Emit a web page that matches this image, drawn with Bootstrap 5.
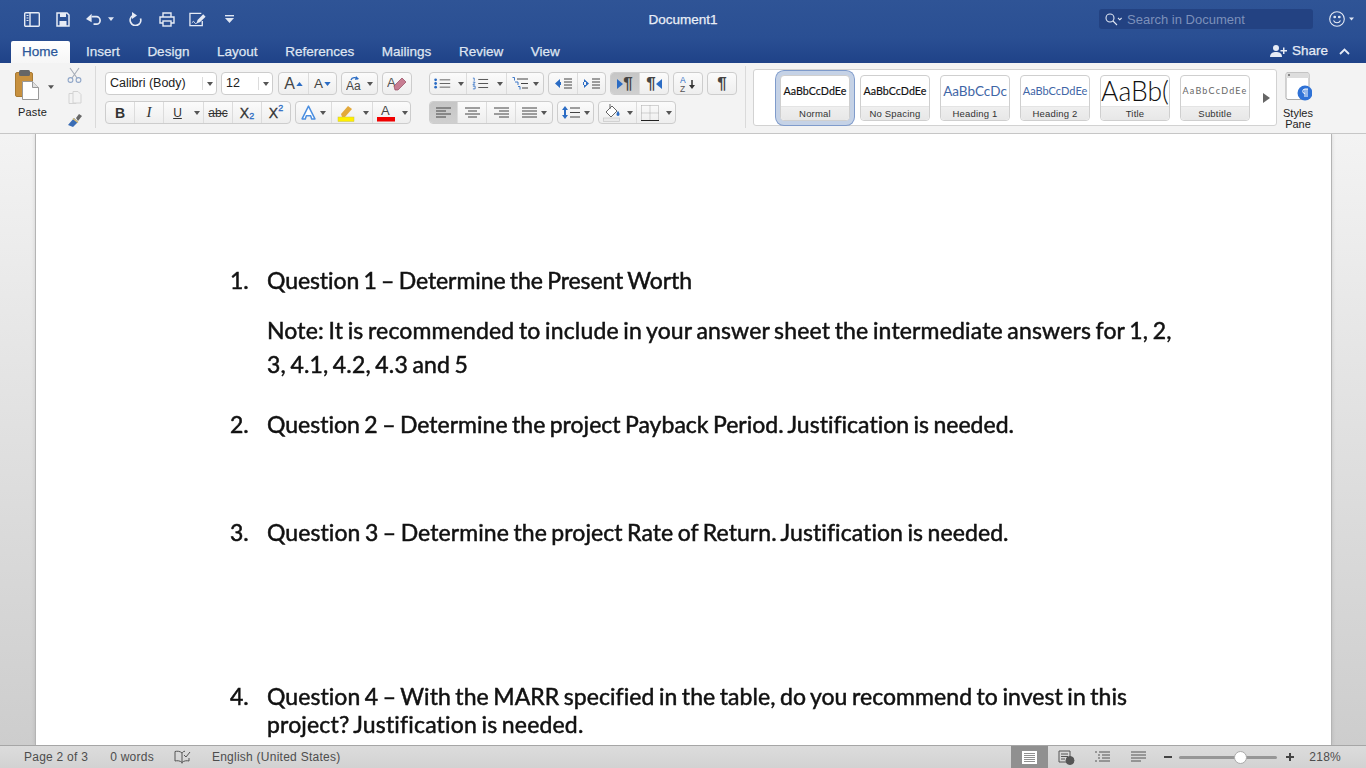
<!doctype html>
<html lang="en"><head><meta charset="utf-8"><title>Document1</title>
<link href="https://cdn.jsdelivr.net/npm/bootstrap@5.3.0/dist/css/bootstrap.min.css" rel="stylesheet">
<style>
html,body{height:100%;overflow:hidden}
body{font-family:"Liberation Sans",Arial,sans-serif;background:#d6d6d6;width:1366px;height:768px}
.app{height:768px}
.title-top{height:38px;background:linear-gradient(#2f5496,#2a4f93);color:#fff;padding-left:24px;padding-right:12px}
.title-top svg{display:block;flex:none}
.ml-6{margin-left:6px}.ml-14{margin-left:14px}.ml-15{margin-left:15px}.ml-16{margin-left:16px}.ml-17{margin-left:17px}.ml-18{margin-left:18px}
.doc-name{left:0;right:0;top:11px;font-size:13.5px;-webkit-text-stroke:.25px #e9eef7;text-align:center;color:#e9eef7;line-height:17px}
.search-box{width:214px;height:20px;background:#234282;border-radius:3px;padding-left:6px;margin-left:auto;margin-right:16px;color:#7c90ba;font-size:13px}
.search-box span{margin-left:5px;padding-top:1px}
.tab-row{height:25px;background:linear-gradient(#2a4f93,#1f4288);padding-left:11px;padding-right:16px}
.w-tab{height:22px;color:#dfe5f1;font-size:13.5px;-webkit-text-stroke:.25px #dfe5f1;padding:2px 11px 0;margin-right:5.6px;line-height:17px}
.w-tab.on{background:linear-gradient(#fff,#f6f6f6);color:#2b579a;-webkit-text-stroke:.25px #2b579a;border-radius:2px 2px 0 0;margin-right:5px;padding-right:12px}
.share-box{height:25px;padding-top:1px}
.share-txt{margin:0 11px 0 4px;color:#e6ebf5;font-size:13.5px;-webkit-text-stroke:.25px #e6ebf5}
.ribbon{height:71px;background:#f3f3f3;border-bottom:1px solid #c6c6c6;flex:none}
.paste{width:96px;height:62px;margin-top:3px;border-right:1px solid #dadada;flex:none}
.paste-main{width:48px;font-size:11px;color:#222;padding:4px 0 0 15px;flex:none}
.paste-lbl{margin:4px 0 0 3px;white-space:nowrap;letter-spacing:.2px}
.paste-car{margin-top:19px;flex:none}
.paste-side{width:15px;margin-left:13px;flex:none;gap:7px;padding-top:1px}
.paste-side svg{flex:none}
.rows{padding-top:9px;margin-left:9px;width:632px;flex:none}
.row-gap{height:23px;margin-bottom:6px;gap:4px}
.row-gap>*{flex:none}
.mr-para{margin-right:13px}
.mr-para2{margin-right:14px}
.tb-shift{margin-left:1px}
.tb{height:23px;border:1px solid #cdcdcd;border-radius:4px;background:linear-gradient(#fbfbfb,#eeeeee);overflow:hidden}
.tb>div{height:21px;border-right:1px solid #dcdcdc;flex:none}
.tb>div:last-child{border-right:0}
.tb>div.noline{border-right:0}
.tb>div.act{background:linear-gradient(#c6c6c6,#cfcfcf)}
.fm{display:flex;align-items:center;justify-content:center;color:#333;font-size:14px;line-height:1}
.c11{width:11px}.c12{width:12px}.c13{width:13px}.c14{width:14px}.c25{width:25px}.c26{width:26px}.c27{width:27px}.c28{width:28px}.c29{width:29px}.c30{width:30px}.c35{width:35px}.c36{width:36px}
.t-b{font-weight:700;font-size:14px}.t-i{font-style:italic;font-family:"Liberation Serif",serif;font-size:15px}.t-s{font-size:12px}.t-x{font-size:14px;-webkit-text-stroke:.3px #333}
.t-x sub,.t-x sup{font-size:9px;color:#2b6cc4;-webkit-text-stroke:.3px #2b6cc4;position:relative;line-height:0}
.t-x sub{bottom:-.4em}.t-x sup{top:-.5em}
.big-a{font-size:16px;color:#444;font-weight:400;margin-right:1px}.sm-a{font-size:13.5px;color:#444;font-weight:400;margin-right:1px}
.pil-g{font-size:17px;color:#444;font-weight:700;line-height:1}
.field{height:23px;background:#fff;border:1px solid #cdcdcd;border-radius:4px;font-size:12.5px;color:#222;padding-left:4px;line-height:21px}
.f-font{width:112px}.f-size{width:52px}
.field span{flex:1 1 auto;white-space:nowrap}
.field i{width:14px;height:13px;border-left:1px solid #dcdcdc;flex:none}
.car{width:0;height:0;border-left:3px solid transparent;border-right:3px solid transparent;border-top:4px solid #555;flex:none;display:block}
.sep-v{width:1px;height:62px;background:#dadada;margin-top:3px;margin-left:8px;flex:none}
.gallery{width:524px;height:57px;margin-top:6px;margin-left:7px;background:#fff;border:1px solid #d2d2d2;border-radius:3px;padding:5px 0 0 26px;gap:10px;flex:none}
.sty{width:70px;height:46px;border:1px solid #cfcfcf;border-radius:4px;background:#fff;flex:none}
.sty-sample{height:30px;line-height:30px;text-align:center;font-family:Lato,sans-serif;font-size:10.7px;color:#111;-webkit-text-stroke:.15px #111;white-space:nowrap;border-radius:4px 4px 0 0}
.h1s{font-size:13.5px;color:#3f66a6;-webkit-text-stroke:0}
.h2s{font-size:11px;color:#3f66a6;-webkit-text-stroke:0}
.tts{font-size:26.5px;color:#111;font-weight:300;-webkit-text-stroke:0}
.sbs{font-size:9px;color:#666;letter-spacing:1.200px;-webkit-text-stroke:0}
.sty-name{height:14px;background:linear-gradient(#efefef,#e7e7e7);font-size:9.500px;line-height:14px;text-align:center;color:#333;border-top:1px solid #e4e4e4;letter-spacing:.2px;border-radius:0 0 4px 4px}
.sty.on{box-shadow:0 0 0 4px #c5d2e6,0 0 0 5px #7f9bcb}
.g-arrow{align-self:center;margin:-4px 0 0 3px;flex:none}
.pane{width:42px;font-size:11px;line-height:11px;text-align:center;color:#222;padding-top:9px;flex:none}
.pane-lbl{margin-top:6px}
.work{height:611px;background:linear-gradient(#f3f3f3,#cdcdcd);overflow:hidden;padding-left:35px;padding-right:34px;flex:none}
.page-sheet{height:100%;background:#fff;border-left:1px solid #b4b4b4;border-right:1px solid #b4b4b4;box-shadow:0 0 4px rgba(0,0,0,.12);padding:132px 0 0 194px;color:#111;font-family:Lato,"Noto Sans",sans-serif;font-size:23px;font-variant-ligatures:none;-webkit-text-stroke:.5px #111;word-spacing:-1.5px;white-space:nowrap;line-height:28px}
.q-line{display:flex;filter:blur(.3px)}
.q-num{width:37px;flex:none}
.q-cont{height:28px}
.mg-a{margin-top:22px}.mg-b{margin-top:6px}.mg-c{margin-top:32px}.mg-d{margin-top:80px}.mg-e{margin-top:136px}
.l1{letter-spacing:-.075px}.l2{letter-spacing:.16px}.l3{letter-spacing:.15px}.l4{letter-spacing:.02px}.l5{letter-spacing:.08px}.l6{letter-spacing:.07px}.l7{letter-spacing:.17px}
.status{height:23px;background:linear-gradient(#dcdcdc,#d2d2d2);border-top:1px solid #a6a6a6;font-size:12px;letter-spacing:.25px;color:#4d4d4d;padding-left:24px;padding-right:25px;flex:none}
.st-w{margin-left:22px}.st-bk{margin-left:20px;flex:none}.st-en{margin-left:21px}
.st-view{width:36px;height:22px;flex:none}
.st-view.act{background:#909090;width:37px}
.slider-t{width:98px;height:3px;background:#969696;border-radius:2px;position:relative;margin-left:7px;flex:none}
.thumb{position:absolute;left:55px;top:-5px;width:13px;height:13px;border-radius:50%;background:#fff;border:1px solid #aaa}
.s-minus{margin-left:8px;flex:none}.s-plus{margin-left:9px;flex:none}.st-pct{margin-left:15px}
</style></head>
<body>
<div class="app d-flex flex-column">
 <div class="title-top d-flex align-items-center position-relative">
  <div class="doc-name position-absolute">Document1</div>
  <svg width="16" height="15" viewBox="0 0 16 15" fill="none" stroke="#e6ebf5" stroke-width="1.4"><rect x=".7" y=".7" width="14.600" height="13.600" rx="1"/><path d="M6 1v13"/><path d="M2.500 3h2v1h-2zM2.500 5.500h2v1h-2zM2.500 8h2v1h-2z" fill="#e6ebf5" stroke="none"/></svg>
  <svg class="ml-16" width="14" height="15" viewBox="0 0 14 15" fill="none"><path d="M1 1h10l2 2v11H1z" stroke="#e6ebf5" stroke-width="1.500"/><path d="M4 1h6v4H4zM3.500 9h7v5h-7z" fill="#e6ebf5"/></svg>
  <svg class="ml-16" width="16" height="13" viewBox="0 0 17 13" fill="none"><path d="M6 3.500h5a4 4 0 0 1 0 8H8" stroke="#e6ebf5" stroke-width="1.800"/><path d="M0 6l6-5.500v9z" fill="#e6ebf5"/></svg>
  <svg class="ml-6" width="6" height="4" viewBox="0 0 8 5"><path d="M0 0h8L4 5z" fill="#dfe6f3"/></svg>
  <svg class="ml-15" width="13" height="14" viewBox="0 0 13 14" fill="none"><path d="M4 3.500a5.300 5.300 0 1 0 7.500 3" stroke="#e6ebf5" stroke-width="1.700"/><path d="M3 0v7l5-3.500z" fill="#e6ebf5"/></svg>
  <svg class="ml-17" width="16" height="15" viewBox="0 0 16 15" fill="none" stroke="#e6ebf5" stroke-width="1.400"><path d="M4 5V1h8v4M4 11H1V5h14v6h-3"/><rect x="4" y="9" width="8" height="5"/></svg>
  <svg class="ml-14" width="18" height="15" viewBox="0 0 19 15" fill="none" stroke="#e6ebf5" stroke-width="1.400"><path d="M13 1H1v13h13V9"/><path d="M3 11c2-2 2-2 3 0s2 0 3 0" stroke-width="1"/><path d="M9 8l6-6 2.500 2.500-6 6-3.500 1z" fill="#e6ebf5" stroke="none"/></svg>
  <svg class="ml-18" width="9" height="8" viewBox="0 0 9 8"><path d="M0 0h9v1.400H0z" fill="#dfe6f3"/><path d="M0 3h9L4.500 8z" fill="#dfe6f3"/></svg>
  <div class="search-box d-flex align-items-center">
   <svg width="17" height="13" viewBox="0 0 17 13" fill="none" stroke="#dfe6f3" stroke-width="1.100"><circle cx="5" cy="5" r="4"/><path d="M8 8l4 4M13 5l1.800 1.800L16.600 5"/></svg>
   <span>Search in Document</span>
  </div>
  <svg width="16" height="16" viewBox="0 0 16 16" fill="none" stroke="#e6ebf5" stroke-width="1.100"><circle cx="8" cy="8" r="7.300"/><path d="M4.500 9.500c1.500 3 5.500 3 7 0"/><circle cx="5.700" cy="6" r=".8" fill="#e6ebf5"/><circle cx="10.300" cy="6" r=".8" fill="#e6ebf5"/></svg>
  <svg class="ms-1" width="5" height="4" viewBox="0 0 8 5"><path d="M0 0h8L4 5z" fill="#dfe6f3"/></svg>
 </div>
 <div class="tab-row d-flex align-items-end">
  <div class="w-tab on">Home</div>
  <div class="w-tab">Insert</div><div class="w-tab">Design</div><div class="w-tab">Layout</div><div class="w-tab">References</div><div class="w-tab">Mailings</div><div class="w-tab">Review</div><div class="w-tab">View</div>
  <div class="ms-auto d-flex align-items-center share-box">
   <svg width="18" height="12" viewBox="0 0 18 12" fill="#e6ebf5"><circle cx="6" cy="3" r="3"/><path d="M0 12c0-4 3-5 6-5s6 1 6 5z"/><path d="M13 2.500h1.500V5H17v1.500h-2.500V9H13V6.500h-2.500V5H13z"/></svg>
   <span class="share-txt">Share</span>
   <svg width="11" height="7" viewBox="0 0 11 7" fill="none" stroke="#e6ebf5" stroke-width="1.800"><path d="M1 6l4.500-4.500L10 6"/></svg>
  </div>
 </div>
 <div class="ribbon d-flex">
  <div class="paste d-flex">
   <div class="paste-main">
    <svg width="24" height="30" viewBox="0 0 24 30" class="d-block"><rect x=".5" y="2.500" width="17" height="24" rx="1.500" fill="#c8913f" stroke="#a87a33"/><rect x="4" y="0" width="11" height="6" rx="1.500" fill="#666"/><path d="M7.500 11.500h10l6 6v12h-16z" fill="#fff" stroke="#999"/><path d="M17.500 11.500v6h6" fill="#e2e2e2" stroke="#999"/></svg>
    <div class="paste-lbl">Paste</div>
   </div>
   <svg class="paste-car" width="6" height="4" viewBox="0 0 8 5"><path d="M0 0h8L4 5z" fill="#555"/></svg>
   <div class="paste-side d-flex flex-column align-items-center">
    <svg width="15" height="16" viewBox="0 0 15 16" fill="none" stroke="#a6adb8" stroke-width="1.100"><path d="M3 1l7 10M12 1L5 11"/><circle cx="3.500" cy="13" r="2.400" stroke="#8fa6c8"/><circle cx="11.500" cy="13" r="2.400" stroke="#8fa6c8"/></svg>
    <svg width="14" height="16" viewBox="0 0 14 16" fill="#f3f3f3" stroke="#d3d3d3"><path d="M1 3.500h7v10H1z"/><path d="M5 1.500h5l3 3v8.500H5z"/></svg>
    <svg width="16" height="15" viewBox="0 0 16 15"><path d="M9 5l3-4 3 2-4 5z" fill="#666"/><path d="M1 12l6-7 4 4-5 5z" fill="#3b6db4"/><path d="M6 5.500l5 4" stroke="#e0c070" stroke-width="1.500"/></svg>
   </div>
  </div>
  <div class="rows">
   <div class="row-gap d-flex">
    <div class="field d-flex align-items-center f-font"><span>Calibri (Body)</span><i class="d-flex align-items-center justify-content-center"><b class="car"></b></i></div>
    <div class="field d-flex align-items-center f-size"><span>12</span><i class="d-flex align-items-center justify-content-center"><b class="car"></b></i></div>
    <div class="tb d-flex tb-shift"><div class="fm c30"><span class="big-a">A</span><svg width="7" height="4" viewBox="0 0 8 5"><path d="M0 5h8L4 0z" fill="#2b6cc4"/></svg></div><div class="fm c27"><span class="sm-a">A</span><svg width="7" height="4" viewBox="0 0 8 5"><path d="M0 0h8L4 5z" fill="#2b6cc4"/></svg></div></div>
    <div class="tb d-flex"><div class="fm c35 gap-1"><svg width="17" height="17" viewBox="0 0 17 17"><text x="0" y="15" font-size="12" font-family="Liberation Sans" fill="#444">Aa</text><path d="M5 5c1-3 5-3 7-1" stroke="#2b6cc4" stroke-width="1.300" fill="none"/><path d="M10 1l3 3-4 1z" fill="#2b6cc4"/></svg><b class="car"></b></div></div>
    <div class="tb d-flex mr-para"><div class="fm c28"><svg width="20" height="18" viewBox="0 0 20 18"><text x="0" y="12" font-size="13" font-family="Liberation Sans" fill="#555">A</text><path d="M7 11l8-8 4 4-8 8H8z" fill="#c77d92" stroke="#93495e" stroke-width=".7"/></svg></div></div>
    <div class="tb d-flex"><div class="fm c25 noline"><svg width="17" height="13" viewBox="0 0 21 13"><circle cx="2" cy="2" r="1.700" fill="#2b6cc4"/><circle cx="2" cy="6.500" r="1.700" fill="#2b6cc4"/><circle cx="2" cy="11" r="1.700" fill="#2b6cc4"/><path d="M7 2h13M7 6.500h13M7 11h13" stroke="#444"/></svg></div><div class="fm c12"><b class="car"></b></div><div class="fm c27 noline"><svg width="17" height="13" viewBox="0 0 19 13"><path d="M1 .5h1.500v3M1 5h2.500L1 8h2.500M1 9.500h2.500v3H1" stroke="#2b6cc4" fill="none" stroke-width=".9"/><path d="M7 2h11M7 6.500h11M7 11h11" stroke="#444"/></svg></div><div class="fm c13"><b class="car"></b></div><div class="fm c36 gap-1"><svg width="17" height="13" viewBox="0 0 17 13"><path d="M.5.500h2v3M3 5h3v3M6 9.500h2v3" stroke="#2b6cc4" fill="none" stroke-width=".9"/><path d="M5 2h11M9 6.500h7M10 11h6" stroke="#444"/></svg><b class="car"></b></div></div>
    <div class="tb d-flex"><div class="fm c29"><svg width="17" height="11" viewBox="0 0 17 11"><path d="M0 5.500L5 1v9zM3 4h3v3H3z" fill="#2b6cc4"/><path d="M9 1h8M9 4h8M9 7h8M9 10h8" stroke="#444"/></svg></div><div class="fm c27"><svg width="17" height="11" viewBox="0 0 17 11"><path d="M6 5.500L1 1v9zM0 4h3v3H0z" fill="#2b6cc4"/><path d="M9 1h8M9 4h8M9 7h8M9 10h8" stroke="#444"/></svg></div></div>
    <div class="tb d-flex"><div class="fm c29 act"><svg width="6" height="10" viewBox="0 0 6 10"><path d="M0 0l6 5-6 5z" fill="#2b6cc4"/></svg><span class="pil-g">¶</span></div><div class="fm c28"><span class="pil-g">¶</span><svg width="6" height="10" viewBox="0 0 6 10"><path d="M6 0L0 5l6 5z" fill="#2b6cc4"/></svg></div></div>
    <div class="tb d-flex"><div class="fm c28"><svg width="20" height="18" viewBox="0 0 20 18"><text x="2" y="8" font-size="8.500" font-family="Liberation Sans" fill="#2b6cc4">A</text><text x="2" y="17" font-size="8.500" font-family="Liberation Sans" fill="#555">Z</text><path d="M14 5v7" stroke="#333" stroke-width="1.500"/><path d="M11 10h6l-3 4z" fill="#333"/></svg></div></div>
    <div class="tb d-flex"><div class="fm c28"><span class="pil-g">¶</span></div></div>
   </div>
   <div class="row-gap d-flex">
    <div class="tb d-flex">
     <div class="fm c29 t-b">B</div><div class="fm c29 t-i">I</div><div class="fm c27 noline t-s"><u>U</u></div><div class="fm c13"><b class="car"></b></div><div class="fm c29 t-s"><s>abc</s></div><div class="fm c29 t-x">X<sub>2</sub></div><div class="fm c28 t-x">X<sup>2</sup></div>
    </div>
    <div class="tb d-flex mr-para2">
     <div class="fm c36 gap-1"><svg width="15" height="15" viewBox="0 0 14 14"><path d="M7 1L1 13h3l1-3h4l1 3h3z" fill="#fff" stroke="#4c8fe0" stroke-width="1.400" stroke-linejoin="round"/></svg><b class="car"></b></div>
     <div class="fm c27 noline"><svg width="18" height="18" viewBox="0 0 18 18"><path d="M4 10l7-8 4 3-7 8H5z" fill="#e3a93a"/><rect x="1" y="13" width="16" height="4.500" fill="#ffef00" stroke="#c9c24a" stroke-width=".5"/></svg></div><div class="fm c14"><b class="car"></b></div>
     <div class="fm c26 noline"><svg width="18" height="18" viewBox="0 0 18 18"><text x="4" y="11" font-size="13" font-family="Liberation Sans" fill="#444">A</text><rect y="13" width="18" height="4.500" fill="#f00000"/></svg></div><div class="fm c11"><b class="car"></b></div>
    </div>
    <div class="tb d-flex">
     <div class="fm c28 act"><svg width="15" height="12"><path d="M0 1h15M0 4h10M0 7h15M0 10h10" stroke="#444"/></svg></div>
     <div class="fm c29"><svg width="15" height="12"><path d="M0 1h15M3 4h9M0 7h15M3 10h9" stroke="#444"/></svg></div>
     <div class="fm c29"><svg width="15" height="12"><path d="M0 1h15M5 4h10M0 7h15M5 10h10" stroke="#444"/></svg></div>
     <div class="fm c36 gap-1"><svg width="15" height="12"><path d="M0 1h15M0 4h15M0 7h15M0 10h15" stroke="#444"/></svg><b class="car"></b></div>
    </div>
    <div class="tb d-flex">
     <div class="fm c35 gap-1"><svg width="18" height="13" viewBox="0 0 18 13"><path d="M3 0l3 4H0zM3 13l3-4H0z" fill="#2b6cc4"/><path d="M2 4h2v5H2z" fill="#2b6cc4"/><path d="M8 2h10M8 6.500h10M8 11h10" stroke="#444"/></svg><b class="car"></b></div>
    </div>
    <div class="tb d-flex">
     <div class="fm c25 noline"><svg width="18" height="19" viewBox="0 0 18 19"><path d="M3 9l6-6 5 5-6 6z" fill="#fff" stroke="#666"/><path d="M7 1v5" stroke="#666"/><path d="M15 8c2 2 2 5 0 5s-2-3 0-5z" fill="#2b6cc4"/><rect x=".5" y="15" width="16" height="3.500" fill="#eaeaea" stroke="#c8c8c8" stroke-width=".7"/></svg></div><div class="fm c13"><b class="car"></b></div>
     <div class="fm c26 noline"><svg width="18" height="16" viewBox="0 0 18 16" fill="none"><path d="M.5.500h17v15M9 .500v15M.5 8h17M.5.500v15" stroke="#aaa" stroke-dasharray="1 1"/><path d="M0 15.500h18" stroke="#222"/></svg></div><div class="fm c12"><b class="car"></b></div>
    </div>
   </div>
  </div>
  <div class="sep-v"></div>
  <div class="gallery d-flex">
   <div class="sty on"><div class="sty-sample">AaBbCcDdEe</div><div class="sty-name">Normal</div></div>
   <div class="sty"><div class="sty-sample">AaBbCcDdEe</div><div class="sty-name">No Spacing</div></div>
   <div class="sty"><div class="sty-sample h1s">AaBbCcDc</div><div class="sty-name">Heading 1</div></div>
   <div class="sty"><div class="sty-sample h2s">AaBbCcDdEe</div><div class="sty-name">Heading 2</div></div>
   <div class="sty"><div class="sty-sample tts">AaBb(</div><div class="sty-name">Title</div></div>
   <div class="sty"><div class="sty-sample sbs">AaBbCcDdEe</div><div class="sty-name">Subtitle</div></div>
   <svg class="g-arrow" width="7" height="10" viewBox="0 0 7 10"><path d="M0 0l7 5-7 5z" fill="#666"/></svg>
  </div>
  <div class="pane">
   <svg width="27" height="30" viewBox="0 0 27 30" class="d-block mx-auto"><rect x="1" y=".5" width="23" height="27" rx="2" fill="#fff" stroke="#aaa"/><path d="M1 2.500a2 2 0 0 1 2-2h19a2 2 0 0 1 2 2V6H1z" fill="#ddd"/><circle cx="4" cy="3" r="1" fill="#666"/><circle cx="20" cy="21" r="7.500" fill="#2f72d6"/><path d="M20 17h3M20 17v8M22 17v8M20 17a2.200 2.200 0 0 0 0 4.500" stroke="#fff" fill="none"/></svg>
   <div class="pane-lbl">Styles<br>Pane</div>
  </div>
 </div>
 <div class="work">
  <div class="page-sheet">
   <div class="q-line"><div class="q-num">1.</div><div class="q-cont l1">Question 1 – Determine the Present Worth</div></div>
   <div class="q-line mg-a"><div class="q-num"></div><div class="q-cont l2">Note: It is recommended to include in your answer sheet the intermediate answers for 1, 2,</div></div>
   <div class="q-line mg-b"><div class="q-num"></div><div class="q-cont l3">3, 4.1, 4.2, 4.3 and 5</div></div>
   <div class="q-line mg-c"><div class="q-num">2.</div><div class="q-cont l4">Question 2 – Determine the project Payback Period. Justification is needed.</div></div>
   <div class="q-line mg-d"><div class="q-num">3.</div><div class="q-cont l5">Question 3 – Determine the project Rate of Return. Justification is needed.</div></div>
   <div class="q-line mg-e"><div class="q-num">4.</div><div class="q-cont l6">Question 4 – With the MARR specified in the table, do you recommend to invest in this</div></div>
   <div class="q-line"><div class="q-num"></div><div class="q-cont l7">project? Justification is needed.</div></div>
  </div>
 </div>
 <div class="status d-flex align-items-center">
  <span>Page 2 of 3</span><span class="st-w">0 words</span>
  <svg class="st-bk" width="17" height="14" viewBox="0 0 17 14" fill="none" stroke="#555"><path d="M8 3C6 1 3 1 1 1.500V11c2-.5 5-.5 7 1.500V3zM8 12.500v1M8 3c1-1 1-1.500 3-1.800M15 8v3c-2-.5-5-.5-7 1.500"/><path d="M10 5l2 2 4-5"/></svg>
  <span class="st-en">English (United States)</span>
  <div class="ms-auto d-flex align-items-center">
   <div class="st-view act d-flex align-items-center justify-content-center"><svg width="15" height="13"><rect width="15" height="13" fill="#fff"/><path d="M2 2.500h11M2 4.500h11M2 6.500h11M2 8.500h11M2 10.500h11" stroke="#909090"/></svg></div>
   <div class="st-view d-flex align-items-center justify-content-center"><svg width="17" height="15" viewBox="0 0 17 15" fill="none" stroke="#555"><path d="M1 1h11v11H1zM3 4h7M3 6.500h7M3 9h4"/><circle cx="12" cy="10.500" r="4" fill="#555"/></svg></div>
   <div class="st-view d-flex align-items-center justify-content-center"><svg width="15" height="12" stroke="#555"><path d="M0 1h2M4 1h11M3 4h2M7 4h8M3 7h2M7 7h8M0 10h2M4 10h11"/></svg></div>
   <div class="st-view d-flex align-items-center justify-content-center"><svg width="15" height="12" stroke="#555"><path d="M0 1h15M0 4h15M0 7h15M0 10h10"/></svg></div>
   <svg class="s-minus" width="8" height="2"><path d="M0 1h8" stroke="#444" stroke-width="2"/></svg>
   <div class="slider-t"><div class="thumb"></div></div>
   <svg class="s-plus" width="8" height="8"><path d="M0 4h8M4 0v8" stroke="#444" stroke-width="2"/></svg>
   <span class="st-pct">218%</span>
  </div>
 </div>
</div>
</body></html>
